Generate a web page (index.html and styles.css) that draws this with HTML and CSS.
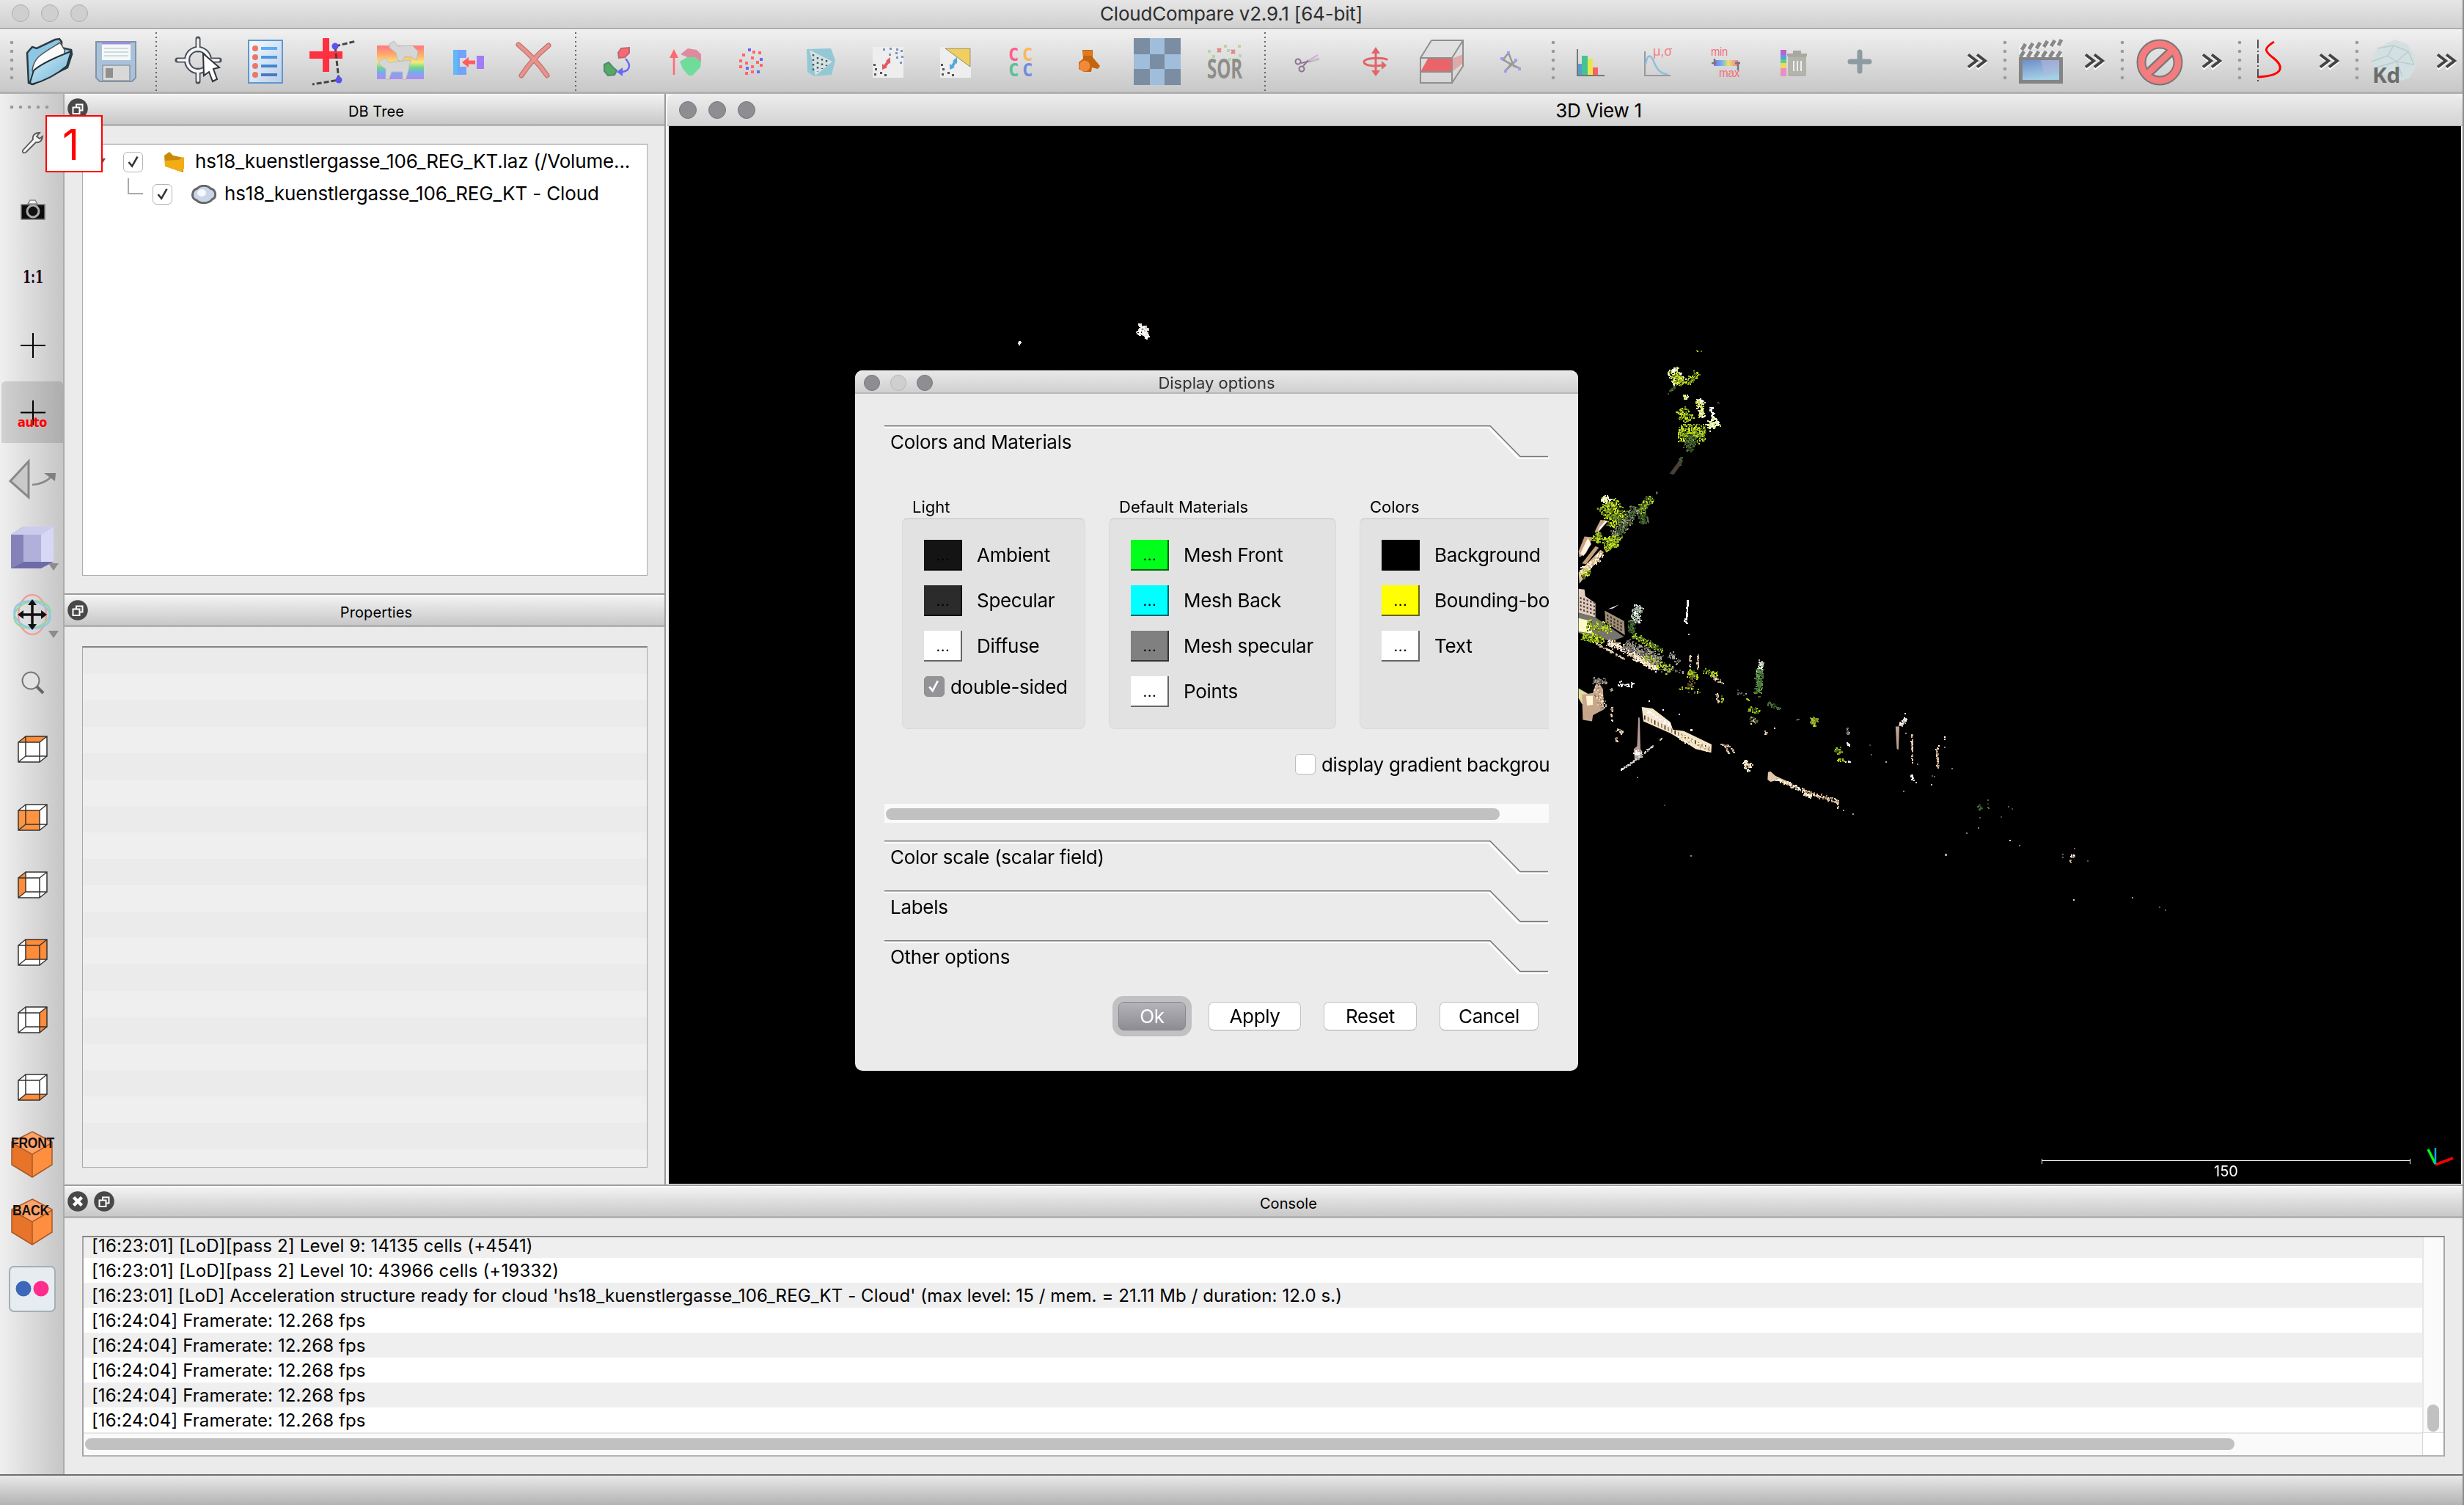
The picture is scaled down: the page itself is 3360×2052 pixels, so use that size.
FILE: index.html
```html
<!DOCTYPE html>
<html lang="en">
<head>
<meta charset="utf-8">
<title>CloudCompare v2.9.1 [64-bit]</title>
<link rel="stylesheet" href="styles.css">
</head>
<body>
<svg class="defs" width="0" height="0">
  <defs>
    <symbol id="grip" overflow="visible"><g fill="#9a9a9a"><circle cx="0" cy="58" r="2.3"/><circle cx="0" cy="70" r="2.3"/><circle cx="0" cy="82" r="2.3"/><circle cx="0" cy="94" r="2.3"/><circle cx="0" cy="106" r="2.3"/></g></symbol>
    <symbol id="sep" overflow="visible"><path d="M0 44V124" stroke="#666" stroke-width="2" stroke-dasharray="2 4"/></symbol>
    <symbol id="more" overflow="visible"><path d="M1 76l11 9-11 9M13 76l11 9-11 9" stroke="#fff" stroke-width="4" fill="none"/><path d="M1 74.500l11 8.500-11 8.500M13 74.500l11 8.500-11 8.500" stroke="#444" stroke-width="4" fill="none"/></symbol>
    <symbol id="wire" overflow="visible"><path d="M1 9H30V36H1ZM11 1H40V28H11ZM1 9L11 1M30 9L40 1M30 36L40 28M1 36L11 28" fill="none" stroke="#333" stroke-width="1.500"/></symbol>
    <symbol id="hull" overflow="visible"><path d="M1 9L11 1H40V28L30 36H1Z" fill="#fff"/></symbol>
    <symbol id="block" overflow="visible"><path d="M44 0L71 14V45L44 62L16 45V14Z" fill="#ff8f40"/><path d="M16 15L44 31V62L16 45Z" fill="#e8742a"/><path d="M44 0L71 15 44 31 16 15Z" fill="#ffa269"/><path d="M44 0L71 14V45L44 62L16 45V14ZM16 15L44 31 71 15M44 31V62" fill="none" stroke="#a85a2a" stroke-width="1.500"/></symbol>
    <symbol id="float" viewBox="0 0 28 28"><circle cx="14" cy="14" r="13.800" fill="#484848"/><path d="M12 12V8.500H20.500V16.500H17" fill="none" stroke="#fff" stroke-width="2"/><path d="M7.500 12.500H16.500V21H7.500Z" fill="none" stroke="#fff" stroke-width="2"/></symbol>
    <symbol id="close" viewBox="0 0 28 28"><circle cx="14" cy="14" r="13.800" fill="#484848"/><path d="M8.500 8.500L19.500 19.500M19.500 8.500L8.500 19.500" stroke="#fff" stroke-width="4.500"/></symbol>
    <symbol id="head" viewBox="0 0 906 46"><path d="M0 2.500H824L865 45H906" fill="none" stroke="#fff" stroke-width="3"/><path d="M0 .7H826L867 42.500H905" fill="none" stroke="#777" stroke-width="1.500"/></symbol>
    <linearGradient id="film" x1="0" y1="0" x2="0.300" y2="1"><stop offset="0" stop-color="#6f8fcc"/><stop offset="1" stop-color="#a5cfe4"/></linearGradient>
    <linearGradient id="rainbow" x1="0" y1="0" x2="0" y2="1"><stop offset=".05" stop-color="#ff7f7f"/><stop offset=".3" stop-color="#ffb06a"/><stop offset=".5" stop-color="#f5ea7a"/><stop offset=".65" stop-color="#6fd98a"/><stop offset=".8" stop-color="#77aaf0"/><stop offset="1" stop-color="#b08af0"/></linearGradient>
    <linearGradient id="spectrum"><stop offset="0" stop-color="#8a6ae0"/><stop offset=".3" stop-color="#6ab0f0"/><stop offset=".6" stop-color="#e8e070"/><stop offset="1" stop-color="#f07aa0"/></linearGradient>
    <linearGradient id="sheet" x1="0" y1="0" x2="1" y2="1"><stop offset="0" stop-color="#f6fbff"/><stop offset="1" stop-color="#b8cdea"/></linearGradient>
    <linearGradient id="folder" x1="0" y1="0" x2="1" y2="1"><stop offset="0" stop-color="#d5eef8"/><stop offset="1" stop-color="#6cb4d6"/></linearGradient>
  </defs>
</svg>

<header class="titlebar">
  <div class="lights"><i></i><i></i><i></i></div>
  <span class="title">CloudCompare v2.9.1 [64-bit]</span>
</header>

<nav class="toolbar">
  <svg viewBox="0 41 24 84" width="24"><use href="#grip" x="16"/></svg>
  <svg viewBox="24 41 90 84" width="90"><path d="M37 72L44 64 50 66 75 54 81 53 84 57V65L97 68 98 74 92 92 45 115 39 113Z" fill="#8cc8e4" stroke="#2c3a42" stroke-width="2.500"/><path d="M44 96C46 78 56 74 82 58L88 68 88 78 48 104Z" fill="#fafafa" stroke="#555" stroke-width="1.500"/><path d="M41 112L46 96Q60 84 97 70L91 90Q70 108 43 115Z" fill="url(#folder)" stroke="#24323a" stroke-width="2"/></svg>
  <svg viewBox="114 41 94 84" width="94"><path d="M131 57H185V106L180 111H136L131 106Z" fill="#a9c2dc" stroke="#8493a3" stroke-width="2"/><path d="M139 59H178V82H139Z" fill="#f4f8f8"/><path d="M139 59H178" stroke="#a090e0" stroke-width="3"/><path d="M142 66H175M142 71H175M142 76H175" stroke="#cfdcdc" stroke-width="2"/><path d="M140 89H177V110H140Z" fill="#d8d8d8" stroke="#8c98a2" stroke-width="1.500"/><path d="M144 93H154V106H144Z" fill="#8f8f8f"/></svg>
  <svg viewBox="208 41 10 84" width="10"><use href="#sep" x="213"/></svg>
  <svg viewBox="218 41 102 84" width="102"><circle cx="270" cy="82" r="15" fill="none" stroke="#4a4f58" stroke-width="8"/><path d="M270 53V68M270 96V111M242 82H256M284 82H299" stroke="#4a4f58" stroke-width="7" stroke-linecap="round"/><circle cx="270" cy="82" r="15" fill="none" stroke="#f4f6f8" stroke-width="4"/><path d="M270 54V67M270 97V110M243 82H255M285 82H298" stroke="#f4f6f8" stroke-width="3.500" stroke-linecap="round"/><path d="M277 73L299 92 291 94 296 108 290 111 285 98 278 103Z" fill="#fff" stroke="#30343a" stroke-width="2"/></svg>
  <svg viewBox="320 41 84 84" width="84"><path d="M339 55H385V113H339Z" fill="url(#sheet)" stroke="#5f97d0" stroke-width="2"/><path d="M356 66H378" stroke="#5cacf0" stroke-width="4"/><path d="M356 78H378" stroke="#4a98e0" stroke-width="4"/><path d="M356 90H378" stroke="#4484d0" stroke-width="4"/><path d="M356 102H378" stroke="#4a78c0" stroke-width="4"/><g fill="#ec7763"><circle cx="348" cy="66" r="4"/><circle cx="348" cy="78" r="4"/><circle cx="348" cy="90" r="4"/><circle cx="348" cy="102" r="4"/></g></svg>
  <svg viewBox="404 41 96 84" width="96"><path d="M440 52H449V70H467V80H449V98H440V80H422V70H440Z" fill="#ff3140"/><path d="M457 63L486 56M457 63L462 109L426 115" fill="none" stroke="#444" stroke-width="3" stroke-dasharray="7 3"/><circle cx="457" cy="63" r="4.500" fill="#5b52f0"/><circle cx="462" cy="109" r="4.500" fill="#5b52f0"/></svg>
  <svg viewBox="500 41 98 84" width="98"><path d="M514 62H578V108H514Z" fill="url(#rainbow)"/><g fill="#d6d6d6" stroke="#bbb" stroke-width="1"><path d="M531 60L537 56 543 63 562 62 570 70 568 82 562 78 552 77 548 84 542 82 540 72 531 65Z"/><path d="M517 83L525 79 531 85 550 83 560 82 557 96 553 109 549 108 549 98 534 98 530 109 526 108 526 94 517 88Z"/></g></svg>
  <svg viewBox="598 41 82 84" width="82"><path d="M618 68H636V79H627V91H636V102H618Z" fill="#72a2fa"/><path d="M618 68H624V102H618Z" fill="#60baf8"/><path d="M650 76H660V94H650Z" fill="#a07cf6"/><path d="M648 85H638" stroke="#ff5a60" stroke-width="5"/><path d="M630 85L639 78V92Z" fill="#ff5a60"/></svg>
  <svg viewBox="680 41 100 84" width="100"><path d="M707 61Q730 80 746 103M748 62Q726 80 711 103" fill="none" stroke="#bd7672" stroke-width="7" stroke-linecap="round"/><path d="M707 61Q730 80 746 103M748 62Q726 80 711 103" fill="none" stroke="#ea928c" stroke-width="4.500" stroke-linecap="round"/></svg>
  <svg viewBox="780 41 10 84" width="10"><use href="#sep" x="785"/></svg>
  <svg viewBox="790 41 100 84" width="100"><path d="M847 66L858 65V72L852 78 844 79 843 72Z" fill="#fd686e" stroke="#b96a72" stroke-width="2"/><path d="M824 88L830 85 836 92 841 96 838 102 829 103 824 97Z" fill="#55aa60" stroke="#508878" stroke-width="2"/><path d="M853 80C862 90 858 98 846 98" fill="none" stroke="#6b66f6" stroke-width="2.500"/><path d="M841 98L849 92V104Z" fill="#6b66f6"/></svg>
  <svg viewBox="890 41 90 84" width="90"><path d="M919 102V74" stroke="#ff6a70" stroke-width="2.500"/><path d="M913 79L919 67 925 79Z" fill="#ff6a70"/><path d="M928 74L938 66 950 68 956 74V84L942 80Z" fill="#e08aa0"/><path d="M927 84L937 78 948 78 956 84 955 92 944 103H939L931 94Z" fill="#70dc9c"/></svg>
  <svg viewBox="980 41 90 84" width="90"><g fill="#ff666b"><path d="M1012 73h4v4h-4zM1026 69h4v4h-4zM1034 70h4v4h-4zM1008 81h4v4h-4zM1024 77h4v4h-4zM1016 84h4v4h-4zM1031 83h4v4h-4zM1008 89h4v4h-4zM1024 89h4v4h-4zM1036 87h4v4h-4zM1016 98h4v4h-4zM1024 96h4v4h-4z"/></g><g fill="#6b66f6"><path d="M1020 66h4v4h-4zM1036 79h4v4h-4zM1017 91h4v4h-4zM1032 96h4v4h-4z"/></g></svg>
  <svg viewBox="1070 41 90 84" width="90"><path d="M1100 67L1133 66 1139 82 1134 102 1110 104 1101 98Z" fill="#94c8d4"/><path d="M1104 68L1135 84 1112 103Z" fill="#d4e2e4"/><path d="M1109 74v24M1115 78v20M1121 80v14M1127 82v8" stroke="#555" stroke-width="2.500" stroke-dasharray="2.500 4"/></svg>
  <svg viewBox="1160 41 100 84" width="100"><path d="M1190 64H1232V106H1190Z" fill="#eee"/><path d="M1204 66h3v3h-3zM1213 65h3v3h-3zM1222 66h3v3h-3zM1212 73h3v3h-3zM1221 71h3v3h-3zM1228 68h3v3h-3zM1222 77h3v3h-3zM1229 76h3v3h-3zM1227 84h3v3h-3z" fill="#7d97bb"/><path d="M1191 87h3v3h-3zM1193 93h3v3h-3zM1192 100h3v3h-3zM1200 98h3v3h-3zM1206 101h3v3h-3z" fill="#555"/><path d="M1206 91L1213 82" stroke="#e05a60" stroke-width="4"/><path d="M1208 83L1214 78V87ZM1203 87V95L1210 92Z" fill="#e05a60"/></svg>
  <svg viewBox="1260 41 90 84" width="90"><path d="M1282 64H1324V106H1282Z" fill="#eee"/><path d="M1289 66H1323V91Z" fill="#f0cf60" stroke="#8f8a70"/><path d="M1283 87h3v3h-3zM1285 93h3v3h-3zM1284 100h3v3h-3zM1292 98h3v3h-3zM1298 101h3v3h-3z" fill="#555"/><path d="M1298 91L1304 82" stroke="#55a8dc" stroke-width="4"/><path d="M1299 83L1305 78V87ZM1295 87V95L1302 92Z" fill="#55a8dc"/></svg>
  <svg viewBox="1350 41 90 84" width="90"><g class="tcc"><text x="1375" y="83" fill="#ff5f8c">C</text><text x="1394" y="83" fill="#f9b95c">C</text><text x="1375" y="104" fill="#58c096">C</text><text x="1394" y="104" fill="#6f8edc">C</text></g></svg>
  <svg viewBox="1440 41 80 84" width="80"><path d="M1476 68H1490V78L1500 90 1497 94 1489 92 1488 98H1478L1471 94V85L1477 80Z" fill="#c4640c"/><circle cx="1479" cy="90" r="7.500" fill="#f0893a"/><path d="M1477 69H1489V76H1477Z" fill="#e07a20"/></svg>
  <svg viewBox="1520 41 110 84" width="110"><path d="M1546 52H1610V116H1546Z" fill="#a0bedb"/><path d="M1546 52h22v22h-22zM1588 52h22v22h-22zM1568 74h20v20h-20zM1546 94h22v22h-22zM1588 94h22v22h-22z" fill="#7a8da2"/></svg>
  <svg viewBox="1630 41 90 84" width="90"><text class="tsor" x="1646" y="107" textLength="48" lengthAdjust="spacingAndGlyphs">SOR</text><g fill="#b7d6a4"><path d="M1647 68h4v4h-4zM1669 61h4v4h-4zM1688 61h4v4h-4zM1673 67h4v4h-4zM1689 74h4v4h-4zM1675 79h4v4h-4zM1653 75h4v4h-4z"/></g><path d="M1660 66l5 5m0-5l-5 5M1679 68l5 5m0-5l-5 5" stroke="#dc8a84" stroke-width="2.500"/></svg>
  <svg viewBox="1720 41 10 84" width="10"><use href="#sep" x="1725"/></svg>
  <svg viewBox="1730 41 100 84" width="100"><g fill="none" stroke="#8c7490" stroke-width="2"><circle cx="1770" cy="84" r="3.500"/><circle cx="1775" cy="94" r="3.500"/><path d="M1774 86L1788 83M1777 90L1784 82"/></g><path d="M1784 83L1797 75" stroke="#dda8da" stroke-width="2.500"/><path d="M1787 84L1799 80" stroke="#c0c0c0" stroke-width="3"/></svg>
  <svg viewBox="1830 41 85 84" width="85"><path d="M1876 70V98" stroke="#e0656a" stroke-width="3"/><path d="M1870 73L1876 64 1882 73ZM1870 96L1876 104 1882 96Z" fill="#e0656a"/><path d="M1892 82C1890 78 1862 78 1860 84C1860 91 1878 90 1886 89" fill="none" stroke="#e0656a" stroke-width="3"/><path d="M1884 83L1891 89 1884 95Z" fill="#e0656a"/></svg>
  <svg viewBox="1915 41 105 84" width="105"><path d="M1952 55H1995V90L1980 113H1937V79Z" fill="#dcdcdc" fill-opacity=".6"/><path d="M1980 80L1995 74V86L1980 98Z" fill="#e0a8a8"/><path d="M1947 80H1980V98H1937Z" fill="#ea646a"/><path d="M1937 79H1980V113H1937ZM1952 55H1995V90L1980 113M1937 79L1952 55M1980 79L1995 55M1937 98H1980" fill="none" stroke="#8f8f8f" stroke-width="2"/></svg>
  <svg viewBox="2020 41 80 84" width="80"><path d="M2057 72L2050 81 2060 88 2052 98M2057 72L2064 90 2073 93M2068 82L2053 96M2048 81L2070 92" fill="none" stroke="#999" stroke-width="2.500"/><path d="M2055 70h4v4h-4zM2046 78h4v4h-4zM2065 80h4v4h-4zM2070 92h4v4h-4zM2051 95h4v4h-4z" fill="#a0a0ee"/></svg>
  <svg viewBox="2100 41 30 84" width="30"><use href="#grip" x="2118"/></svg>
  <svg viewBox="2130 41 80 84" width="80"><path d="M2151 87h6v16h-6z" fill="#5a9ad0"/><path d="M2157 76h8v27h-8z" fill="#45c492"/><path d="M2165 80h7v23h-7z" fill="#e8e650"/><path d="M2172 92h7v11h-7z" fill="#ff5f62"/><path d="M2151 67V103H2188" fill="none" stroke="#777" stroke-width="2"/></svg>
  <svg viewBox="2210 41 90 84" width="90"><path d="M2243 70V103H2278" fill="none" stroke="#999" stroke-width="2"/><path d="M2244 88C2247 70 2252 76 2256 86S2266 101 2274 101" fill="none" stroke="#8cc0e0" stroke-width="2.500"/><text class="tmu" x="2254" y="76" textLength="26">μ,σ</text></svg>
  <svg viewBox="2300 41 100 84" width="100"><path d="M2337 82H2370V90H2337Z" fill="url(#spectrum)"/><path d="M2338 80V88M2370 84V96M2334 86H2340M2366 86H2373" stroke="#777" stroke-width="2.500"/><text class="tmm" x="2333" y="76" textLength="23" lengthAdjust="spacingAndGlyphs">min</text><text class="tmm" x="2344" y="105" textLength="28" lengthAdjust="spacingAndGlyphs">max</text></svg>
  <svg viewBox="2400 41 90 84" width="90"><path d="M2428 68h8v36h-8z" fill="#e890c0"/><path d="M2428 68h8v7h-8z" fill="#c060d0"/><path d="M2428 75h8v6h-8z" fill="#58a0e0"/><path d="M2428 81h8v5h-8z" fill="#60d080"/><path d="M2428 86h8v7h-8z" fill="#ecd860"/><path d="M2439 77H2462V103H2439Z" fill="#b4b4ac" stroke="#a0a098"/><path d="M2437 73H2464V77H2437ZM2445 69H2456V73H2445Z" fill="#a8a8a2"/><path d="M2446 83V97M2451 83V97M2456 83V97" stroke="#eee" stroke-width="2"/></svg>
  <svg viewBox="2490 41 110 84" width="110"><path d="M2536 71V97M2523 84H2549" stroke="#8d9ba2" stroke-width="7" stroke-linecap="round"/></svg>
  <svg viewBox="2600 41 120 84" width="120"><use href="#more" x="2683"/></svg>
  <svg viewBox="2720 41 26 84" width="26"><use href="#grip" x="2734"/></svg>
  <svg viewBox="2746 41 80 84" width="80"><path d="M2753 61L2812 54V62L2753 69ZM2753 70H2812V78H2753Z" fill="#eee"/><path d="M2757 68l5-8M2767 67l5-8M2777 66l5-8M2787 64l5-8M2797 63l5-8M2807 62l4-8M2755 78l5-8M2765 78l5-8M2775 78l5-8M2785 78l5-8M2795 78l5-8M2805 78l5-8" stroke="#888" stroke-width="5"/><path d="M2753 78H2813V114H2753Z" fill="#848484"/><path d="M2758 82H2808V109H2758Z" fill="url(#film)"/><path d="M2783 82H2808V96L2788 104Z" fill="#b4b8dc" opacity=".6"/></svg>
  <svg viewBox="2826 41 54 84" width="54"><use href="#more" x="2843"/></svg>
  <svg viewBox="2880 41 24 84" width="24"><use href="#grip" x="2894"/></svg>
  <svg viewBox="2904 41 86 84" width="86"><circle cx="2945" cy="85" r="25" fill="none" stroke="#777" stroke-width="13"/><path d="M2928 101L2962 69" stroke="#777" stroke-width="13"/><circle cx="2945" cy="85" r="25" fill="none" stroke="#f47c7e" stroke-width="9"/><path d="M2926 103L2964 67" stroke="#f47c7e" stroke-width="8.500"/></svg>
  <svg viewBox="2990 41 50 84" width="50"><use href="#more" x="3003"/></svg>
  <svg viewBox="3040 41 24 84" width="24"><use href="#grip" x="3054"/></svg>
  <svg viewBox="3064 41 76 84" width="76"><path d="M3079 54V114" stroke="#222" stroke-width="1.500" stroke-dasharray="12 3 2 3"/><path d="M3101 57C3086 66 3088 70 3100 79C3114 90 3116 103 3079 105" fill="none" stroke="#f00" stroke-width="3"/></svg>
  <svg viewBox="3140 41 60 84" width="60"><use href="#more" x="3163"/></svg>
  <svg viewBox="3200 41 24 84" width="24"><use href="#grip" x="3214"/></svg>
  <svg viewBox="3224 41 80 84" width="80"><path d="M3234 84L3242 66 3256 58 3266 54 3282 60 3292 74 3295 90 3286 106 3274 110 3240 98Z" fill="#d3e0e2"/><path d="M3234 84L3256 76 3264 62 3284 70 3292 88M3256 76L3268 84 3284 70M3268 84L3276 104M3242 66L3264 62M3240 92L3268 84L3292 88" fill="none" stroke="#bccbcd" stroke-width="1.500"/><text class="tkd" x="3235" y="113" textLength="38" lengthAdjust="spacingAndGlyphs">Kd</text></svg>
  <svg viewBox="3304 41 54 84" width="54"><use href="#more" x="3323"/></svg>
</nav>

<main class="main">
  <aside class="sidebar">
    <svg viewBox="0 128 86 32" height="32"><g fill="#9a9a9a"><circle cx="16" cy="146" r="2.300"/><circle cx="28" cy="146" r="2.300"/><circle cx="40" cy="146" r="2.300"/><circle cx="52" cy="146" r="2.300"/><circle cx="64" cy="146" r="2.300"/></g></svg>
    <svg viewBox="0 160 86 80" height="80"><path d="M31 205L45 190C44 184 48 181 54 181L50 186 54 189 58 186C57 193 53 195 49 194L35 208C32 209 30 208 31 205Z" fill="#f6f6f6" stroke="#555" stroke-width="1.800"/></svg>
    <svg viewBox="0 240 86 85" height="85"><path d="M38 278L41 273H48L51 278Z" fill="#f4f4f4" stroke="#888" stroke-width="1.500"/><path d="M29 279H61V299H29Z" fill="#0c0c0c" stroke="#777" stroke-width="1.500"/><circle cx="45" cy="288" r="8" fill="#111" stroke="#aaa" stroke-width="3"/></svg>
    <svg viewBox="0 325 86 95" height="95"><text class="t11" x="31" y="386" textLength="28" lengthAdjust="spacingAndGlyphs">1:1</text></svg>
    <svg viewBox="0 420 86 90" height="90"><path d="M28 471H62M45 454V488" stroke="#000" stroke-width="2"/></svg>
    <svg viewBox="0 510 86 100" height="100"><path d="M2 604V526Q2 520 8 520H80Q86 520 86 526V604Z" fill="#000" fill-opacity=".12"/><path d="M28 562.500H62M45 546V580" stroke="#000" stroke-width="2"/><text class="tauto" x="24" y="582" textLength="40" lengthAdjust="spacingAndGlyphs">auto</text></svg>
    <svg viewBox="0 610 86 80" height="80"><path d="M14 656L39 629V678Z" fill="#c9c9c9" stroke="#888" stroke-width="3"/><path d="M44 661Q60 660 70 650" fill="none" stroke="#888" stroke-width="2.500"/><path d="M60 645L76 645 75 656Z" fill="#808080"/></svg>
    <svg viewBox="0 690 86 100" height="100"><path d="M15 729L32 718H73V765L56 775H15Z" fill="#b1b0da"/><path d="M15 729L32 718V766L15 775Z" fill="#8482b8"/><path d="M32 718H73L56 729H15Z" fill="#cccbee"/><path d="M56 729L73 718V765L56 775Z" fill="#d8d7f6"/><path d="M15 775L32 766H73L56 775Z" fill="#6d6ba8"/><path d="M66 768H80L73 778Z" fill="#8c8c8c"/></svg>
    <svg viewBox="0 790 86 90" height="90"><ellipse cx="44" cy="838" rx="19" ry="27" fill="none" stroke="#efa0a0" stroke-width="2.500"/><ellipse cx="44" cy="838" rx="25" ry="18" fill="none" stroke="#92d99a" stroke-width="2.500" transform="rotate(-15 44 838)"/><ellipse cx="44" cy="838" rx="25" ry="18" fill="none" stroke="#92c6ea" stroke-width="2.500" transform="rotate(15 44 838)"/><path d="M44 822V854M28 838H60" stroke="#111" stroke-width="3.500"/><path d="M44 817l6 8h-12zM44 859l6-8h-12zM24 838l8-6v12zM64 838l-8-6v12z" fill="#111"/><path d="M66 860H80L73 870Z" fill="#8c8c8c"/></svg>
    <svg viewBox="0 880 86 98" height="98"><circle cx="42" cy="928" r="11.500" fill="#e6e6e6" fill-opacity=".7" stroke="#777" stroke-width="2"/><path d="M50 936L59 945" stroke="#666" stroke-width="4"/></svg>
    <svg viewBox="0 978 86 92" height="92"><use href="#hull" x="24" y="1003"/><path d="M25 1012L35 1004H64L54 1012Z" fill="#ff8c38"/><use href="#wire" x="24" y="1003"/></svg>
    <svg viewBox="0 1070 86 92" height="92"><use href="#hull" x="24" y="1096"/><path d="M25 1105H54V1132H25Z" fill="#ff9440"/><use href="#wire" x="24" y="1096"/></svg>
    <svg viewBox="0 1162 86 92" height="92"><use href="#hull" x="24" y="1188"/><path d="M25 1197L35 1189V1216L25 1224Z" fill="#ff8c38"/><use href="#wire" x="24" y="1188"/></svg>
    <svg viewBox="0 1254 86 92" height="92"><use href="#hull" x="24" y="1280"/><path d="M35 1281H64V1308H35Z" fill="#ff8c38"/><use href="#wire" x="24" y="1280"/></svg>
    <svg viewBox="0 1346 86 92" height="92"><use href="#hull" x="24" y="1372"/><path d="M54 1381L64 1373V1400L54 1408Z" fill="#ff8c38"/><use href="#wire" x="24" y="1372"/></svg>
    <svg viewBox="0 1438 86 92" height="92"><use href="#hull" x="24" y="1464"/><path d="M25 1500L35 1492H64L54 1500Z" fill="#ff8c38"/><use href="#wire" x="24" y="1464"/></svg>
    <svg viewBox="0 1530 86 92" height="92"><use href="#block" y="1543"/><text class="tcube" x="15" y="1565" textLength="59" lengthAdjust="spacingAndGlyphs">FRONT</text></svg>
    <svg viewBox="0 1622 86 92" height="92"><use href="#block" y="1635"/><text class="tcube" x="17" y="1657" textLength="50" lengthAdjust="spacingAndGlyphs">BACK</text></svg>
    <svg viewBox="0 1714 86 86" height="86"><rect x="13" y="1727" width="62" height="61" rx="6" fill="#e6ecf0" stroke="#a3b0b8" stroke-width="2"/><circle cx="32" cy="1757" r="10.500" fill="#3d68b8"/><circle cx="56" cy="1757" r="10.500" fill="#ff2c8c"/></svg>
  </aside>

  <div class="work">
    <div class="upper">
      <div class="docks">
        <section class="dock tree-dock">
          <h2 class="dock-title"><span class="dock-buttons"><svg><use href="#float"/></svg></span><span class="dock-name">DB Tree</span></h2>
          <div class="tree">
            <div class="row">
              <svg class="twist" viewBox="0 0 16 14"><path d="M0 2H14L7 13Z" fill="#555"/></svg>
              <span class="check"><svg viewBox="0 0 27 27"><path d="M7 14L12 20 20 6" fill="none" stroke="#333" stroke-width="2.800"/></svg></span>
              <svg class="ico-folder" viewBox="0 0 30 30"><path d="M1 6L8 1 13 6 27 9V29L20 27 2 20Z" fill="#c98a08"/><path d="M2 13L20 12 28 8V24L24 28 2 21Z" fill="#f2ac14"/></svg>
              <span>hs18_kuenstlergasse_106_REG_KT.laz (/Volume...</span>
            </div>
            <div class="row child">
              <svg class="branch" viewBox="0 0 22 24"><path d="M1 0V21H21" fill="none" stroke="#b0a8a4" stroke-width="2"/></svg>
              <span class="check"><svg viewBox="0 0 27 27"><path d="M7 14L12 20 20 6" fill="none" stroke="#333" stroke-width="2.800"/></svg></span>
              <svg class="ico-cloud" viewBox="0 0 34 26"><path d="M8 5C12 0 22 0 26 5C34 7 35 17 28 20C24 26 11 26 7 21C-1 19 0 7 8 5Z" fill="#c9d5e8" stroke="#666" stroke-width="3"/><ellipse cx="14" cy="11" rx="6" ry="5" fill="#f6f8fc"/></svg>
              <span>hs18_kuenstlergasse_106_REG_KT - Cloud</span>
            </div>
          </div>
        </section>
        <section class="dock props-dock">
          <h2 class="dock-title"><span class="dock-buttons"><svg><use href="#float"/></svg></span><span class="dock-name">Properties</span></h2>
          <div class="props"></div>
        </section>
      </div>

      <section class="view">
        <div class="view-title"><div class="lights dark"><i></i><i></i><i></i></div><span>3D View 1</span></div>
        <div class="scene">
          <canvas id="cloud" width="2444" height="1442"></canvas>
          <div class="scale"><i></i><span>150</span></div>
          <svg class="axes" viewBox="0 0 40 26"><path d="M14 22L4 2" stroke="#0f0" stroke-width="3.500"/><path d="M14 23L38 14" stroke="#f00" stroke-width="3.500"/><path d="M14 22V0" stroke="#00a8ff" stroke-width="2.500"/></svg>
        </div>
      </section>
    </div>

    <section class="dock console-dock">
      <h2 class="dock-title"><span class="dock-buttons"><svg><use href="#close"/></svg><svg><use href="#float"/></svg></span><span class="dock-name">Console</span></h2>
      <div class="console">
        <ul class="log">
          <li>[16:23:01] [LoD][pass 2] Level 9: 14135 cells (+4541)</li>
          <li>[16:23:01] [LoD][pass 2] Level 10: 43966 cells (+19332)</li>
          <li>[16:23:01] [LoD] Acceleration structure ready for cloud 'hs18_kuenstlergasse_106_REG_KT - Cloud' (max level: 15 / mem. = 21.11 Mb / duration: 12.0 s.)</li>
          <li>[16:24:04] Framerate: 12.268 fps</li>
          <li>[16:24:04] Framerate: 12.268 fps</li>
          <li>[16:24:04] Framerate: 12.268 fps</li>
          <li>[16:24:04] Framerate: 12.268 fps</li>
          <li>[16:24:04] Framerate: 12.268 fps</li>
        </ul>
        <div class="vbar"><i></i></div>
        <div class="hbar"><i></i></div>
        <div class="corner"></div>
      </div>
    </section>
  </div>
</main>
<footer class="status"></footer>

<div class="callout">1</div>

<div class="dialog">
  <div class="dialog-title"><div class="lights dark small"><i></i><i class="off"></i><i></i></div><span>Display options</span></div>
  <div class="dialog-body">
    <div class="sect first"><svg><use href="#head"/></svg><span>Colors and Materials</span></div>
    <div class="panel">
      <div class="groups">
        <div class="group g-light"><h3>Light</h3><div class="box">
          <div class="swatch-row"><b class="sw ambient">...</b>Ambient</div>
          <div class="swatch-row"><b class="sw specular">...</b>Specular</div>
          <div class="swatch-row"><b class="sw white">...</b>Diffuse</div>
          <div class="check-row"><b class="cb on"><svg viewBox="0 0 28 28"><path d="M7 15L12 21 20 6" fill="none" stroke="#fff" stroke-width="3"/></svg></b>double-sided</div>
        </div></div>
        <div class="group g-mat"><h3>Default Materials</h3><div class="box">
          <div class="swatch-row"><b class="sw green">...</b>Mesh Front</div>
          <div class="swatch-row"><b class="sw cyan">...</b>Mesh Back</div>
          <div class="swatch-row"><b class="sw gray">...</b>Mesh specular</div>
          <div class="swatch-row"><b class="sw white">...</b>Points</div>
        </div></div>
        <div class="group g-col"><h3>Colors</h3><div class="box">
          <div class="swatch-row"><b class="sw black"></b>Background</div>
          <div class="swatch-row"><b class="sw yellow">...</b>Bounding-bo</div>
          <div class="swatch-row"><b class="sw white">...</b>Text</div>
        </div></div>
      </div>
      <div class="check-row gradient"><b class="cb"></b>display gradient backgrou</div>
      <div class="panel-bar"><i></i></div>
    </div>
    <div class="sect"><svg><use href="#head"/></svg><span>Color scale (scalar field)</span></div>
    <div class="sect"><svg><use href="#head"/></svg><span>Labels</span></div>
    <div class="sect"><svg><use href="#head"/></svg><span>Other options</span></div>
    <div class="actions"><button class="btn ok">Ok</button><button class="btn apply">Apply</button><button class="btn reset">Reset</button><button class="btn cancel">Cancel</button></div>
  </div>
</div>
<script src="cloud.js"></script>
</body>
</html>
```
FILE: styles.css
```css
* { box-sizing: border-box; margin: 0; padding: 0; }
body { width: 3360px; height: 2052px; overflow: hidden; display: flex; flex-direction: column; border-right: 2px solid #8c8c8c; background: #ebebeb; color: #000; font: 26px/31px Inter, "Liberation Sans", sans-serif; letter-spacing: -.3px; position: relative; }
svg { display: block; }
.defs { position: absolute; }

.titlebar { flex: none; height: 40px; display: grid; grid-template-columns: 1fr auto 1fr; background: linear-gradient(#e6e6e6, #d0d0d0); border-bottom: 2px solid #acacac; color: #2e2e2e; letter-spacing: -.18px; }
.title { line-height: 38px; }
.lights { display: flex; gap: 16px; padding: 6px 0 0 16px; }
.lights i { width: 24px; height: 24px; border-radius: 50%; background: #cfcfcf; border: 1.500px solid #adadad; }

.toolbar { flex: none; height: 88px; display: flex; background: linear-gradient(#f0f0f0, #c8c8c8); border-top: 1px solid #fff; border-bottom: 3px solid #b0b0b0; }
.toolbar svg { flex: none; height: 84px; }
.tcc text { font: 700 24px "DejaVu Sans Mono", monospace; }
.tsor { font: 700 37px "Open Sans", sans-serif; fill: #8e8e8a; }
.tmu { font: 400 18px "Liberation Sans", sans-serif; fill: #f58088; }
.tmm { font: 400 17px "Liberation Sans", sans-serif; fill: #f07078; }
.tkd { font: 700 28px "Open Sans", sans-serif; fill: #6c6c6c; }
.t11 { font: 700 25px "DejaVu Serif", serif; fill: #1a001a; }
.tauto { font: 700 18px "DejaVu Sans", sans-serif; fill: #f00; }
.tcube { font: 700 21px "Liberation Sans", sans-serif; fill: #111; }

.main { flex: none; height: 1882px; display: flex; }
.sidebar { flex: none; width: 88px; background: linear-gradient(90deg, #efefef, #c6c6c6); border-right: 2px solid #ababab; }
.sidebar svg { width: 86px; }
.work { flex: 1; min-width: 0; display: flex; flex-direction: column; }
.upper { flex: none; height: 1487px; display: flex; }
.docks { flex: none; width: 820px; border-right: 2px solid #999; display: flex; flex-direction: column; }

.dock { flex: none; }
.tree-dock { height: 681px; }
.props-dock { height: 806px; border-top: 2px solid #9c9c9c; }
.console-dock { height: 395px; border-top: 2px solid #9c9c9c; }
.dock-title { height: 44px; display: flex; background: linear-gradient(#f2f2f2, #c8c8c8); border-top: 2px solid #f9f9f9; border-bottom: 3px solid #b2b2b2; font-size: 20px; font-weight: 400; line-height: 45px; letter-spacing: .1px; }
.dock-name { flex: 1; text-align: center; }
.tree-dock .dock-title { border-top-width: 1px; line-height: 46px; }
.dock-buttons { display: flex; gap: 8px; padding: 5px 0 0 4px; }
.dock-buttons svg { width: 28px; height: 28px; }

.tree { margin: 24px 24px 0; height: 589px; background: #fff; border: 1.500px solid #adadad; border-top-color: #8a8a8a; letter-spacing: -.14px; padding-top: 2px; width: 771px; }
.row { height: 44px; display: flex; align-items: center; line-height: 38px; }
.row > span:last-child { height: 40px; }
.twist { width: 16px; height: 14px; margin-left: 17px; flex: none; }
.check { flex: none; width: 27px; height: 28px; border: 1.500px solid #b4b4b4; border-radius: 6px; background: #fff; margin-left: 22px; }
.ico-folder { flex: none; width: 30px; height: 30px; margin: 0 13px 0 28px; }
.child { padding-left: 61px; }
.branch { width: 22px; height: 24px; align-self: flex-start; flex: none; }
.child .check { margin-left: 12px; }
.ico-cloud { flex: none; width: 34px; height: 26px; margin: 0 11px 0 26px; }

.props { margin: 26px 24px 0; width: 771px; height: 711px; border: 1.500px solid #a8a8a8; border-top: 2px solid #858585; background: repeating-linear-gradient(#ebebeb 0 36px, #efefef 36px 72px); }

.view { flex: 1; min-width: 0; background: #f4f4f4; padding-left: 2px; display: flex; flex-direction: column; }
.view-title { height: 44px; display: flex; background: linear-gradient(#ededed, #d3d3d3); border-bottom: 1px solid #b4b4b4; line-height: 45px; border-radius: 10px 10px 0 0; }
.view-title span { flex: 1; text-align: center; padding-right: 28px; }
.lights.dark { padding: 10px 0 0 16px; }
.lights.dark i { background: #8e8d92; border-color: #77767b; }
.scene { flex: none; height: 1442px; margin: 0 2px 0 2px; background: #000; position: relative; }
#cloud { display: block; }
.scale { position: absolute; left: 1872px; top: 1408px; width: 503px; color: #fff; text-align: center; }
.scale i { display: block; height: 7px; border: solid #fff; border-width: 0 1px; background: linear-gradient(#fff, #fff) 0 2px / 100% 1px no-repeat; }
.scale span { display: block; font-size: 20px; line-height: 21px; letter-spacing: 0; }
.axes { position: absolute; left: 2395px; top: 1393px; width: 40px; height: 26px; }

.console { margin: 24px 24px 0; height: 301px; border: 2px solid #a6a6a6; border-top-color: #858585; border-bottom-color: #b4b4b4; display: grid; grid-template: 266px 1fr / 1fr 29px; }
.log { list-style: none; overflow: hidden; background: #fff; display: flex; flex-direction: column; justify-content: flex-end; font-size: 24px; letter-spacing: .09px; }
.log li { flex: none; height: 34px; line-height: 35px; padding-left: 11px; white-space: nowrap; }
.log li:nth-child(-n+2) { letter-spacing: .18px; }
.log li:nth-child(odd) { background: #efefef; }
.vbar { background: #fafafa; border-left: 2px solid #e6e6e6; padding: 228px 0 0 5px; }
.vbar i { display: block; width: 16px; height: 37px; border-radius: 8px; background: #c1c1c1; }
.hbar { background: #fafafa; border-top: 2px solid #e6e6e6; padding: 6px 0 0 2px; }
.hbar i { display: block; width: 2931px; height: 16px; border-radius: 8px; background: #c1c1c1; }
.corner { background: #fff; border: solid #d6d6d6; border-width: 1px 0 0 1px; }

.status { flex: none; height: 42px; border-top: 2px solid #6e6e6e; background: linear-gradient(#e8e8e8, #b3b3b3); }

.callout { position: absolute; left: 62px; top: 157px; width: 78px; height: 78px; border: 2px solid #f00; background: #fff; color: #f00; font: 57px/77px Inter, sans-serif; text-align: center; padding-right: 9px; }

.dialog { position: absolute; left: 1166px; top: 505px; width: 986px; height: 955px; background: #ebebeb; border-radius: 10px; overflow: hidden; }
.dialog-title { height: 32px; display: grid; grid-template-columns: 1fr auto 1fr; background: linear-gradient(#e9e9e9, #d0d0d0); border-bottom: 2px solid #b8b8b8; font-size: 22px; line-height: 34px; letter-spacing: 0; color: #333; }
.lights.small { padding: 6px 0 0 12px; gap: 14px; }
.lights.small i { width: 22px; height: 22px; }
.lights.small i.off { background: #cfcfcf; border-color: #b5b5b5; }
.dialog-body { padding: 43px 40px 0; }
.sect { height: 68px; display: grid; }
.sect > * { grid-area: 1 / 1; }
.sect svg { width: 906px; height: 46px; }
.sect span { padding-left: 8px; line-height: 45px; height: 45px; }
.sect.first { height: 46px; }
.panel { overflow: hidden; width: 906px; height: 520px; }
.groups { display: flex; gap: 32px; padding: 52px 0 0 24px; white-space: nowrap; }
.group { flex: none; }
.group h3 { height: 28px; padding-left: 14px; font-size: 22px; font-weight: 400; line-height: 26px; letter-spacing: 0; }
.g-light { width: 250px; }
.g-mat { width: 310px; }
.g-col { width: 300px; }
.box { height: 288px; padding: 28px 0 0 29px; display: flex; flex-direction: column; gap: 20px; background: #e2e2e2; border: 1px solid #dadada; border-top: 2px solid #d4d4d4; border-radius: 8px; }
.swatch-row { display: flex; height: 42px; line-height: 42px; }
.sw { width: 52px; height: 42px; margin-right: 20px; font-size: 20px; font-weight: 400; line-height: 42px; text-align: center; letter-spacing: .5px; border: 2px solid; border-color: transparent rgba(0,0,0,.6) rgba(0,0,0,.6) transparent; border-width: 0 2px 2px 0; padding-left: 2px; }
.ambient { background: #141414; }
.specular { background: #2b2b2b; }
.white { background: #fff; }
.green { background: #00ff1a; }
.cyan { background: #0ff; }
.gray { background: #808080; }
.black { background: #000; }
.yellow { background: #ff0; }
.check-row { display: flex; height: 28px; line-height: 29px; white-space: nowrap; }
.cb { flex: none; width: 28px; height: 28px; margin-right: 8px; border: 1.500px solid #bcbcbc; border-radius: 5px; background: #fff; }
.cb.on { background: #949398; border-color: #8c8b90; }
.cb svg { width: 25px; height: 25px; }
.gradient { margin: 34px 0 0 560px; }
.panel-bar { margin-top: 40px; height: 26px; background: #fafafa; padding: 6px 0 0 2px; }
.panel-bar i { display: block; width: 837px; height: 16px; border-radius: 8px; background: #c1c1c1; }
.actions { display: flex; padding: 16px 0 0 319px; gap: 31px; }
.btn { height: 39px; border: 1.500px solid #c4c4c4; border-bottom-color: #a8a8a8; border-radius: 7px; background: #fff; color: #000; font: inherit; letter-spacing: -.4px; line-height: 36px; }
.ok { width: 92px; color: #fff; background: linear-gradient(#b4b3b9, #8d8c92); border-color: #87868c; box-shadow: 0 0 0 8px #c0c1c3; }
.apply { width: 126px; }
.reset { width: 127px; }
.cancel { width: 135px; }
```
FILE: cloud.js
```javascript
// Draws the scanned point cloud as small coloured points on the 3D view's canvas.
const ctx = document.getElementById('cloud').getContext('2d');
let seed = 7;
const rnd = () => (seed = (seed * 16807) % 2147483647) / 2147483647;
const SX = 0.574, SY = 0.5102, OX = 1228, OY = 288;
const leaf = ['#b8d020', '#8fae1a', '#d4e41e', '#5f7d1c', '#3d5a1c', '#a0c414'];
const dark = ['#2c4420', '#3a5a2a', '#4a6a34', '#24361c', '#56703a'];
const pale = ['#ffffff', '#f0f4c8', '#dce88a', '#c8dc40'];
const wall = ['#c8ac90', '#e0c8a8', '#a88c74', '#f0e0c0', '#8c7460'];
const cream = ['#fff4d0', '#f4e4c0', '#ffffff', '#e4cca4', '#c4a484'];
const grey = ['#6c6860', '#8c8880', '#484640', '#a8a49c'];
const white = ['#ffffff', '#e8e8e8'];

function dot(x, y, c, s) {
  ctx.fillStyle = c;
  ctx.fillRect(Math.round(OX + x * SX), Math.round(OY + y * SY), s || 2, s || 2);
}
// Points scattered across a band of width w that follows a segment.
function band(x1, y1, x2, y2, w, n, pal) {
  const L = Math.hypot(x2 - x1, y2 - y1) || 1, nx = -(y2 - y1) / L, ny = (x2 - x1) / L;
  for (let i = 0; i < n; i++) {
    const t = rnd(), o = (rnd() + rnd() - 1) * w / 1.4;
    dot(x1 + (x2 - x1) * t + nx * o, y1 + (y2 - y1) * t + ny * o, pal[rnd() * pal.length | 0]);
  }
}
function poly(pts, c) {
  ctx.fillStyle = c;
  ctx.beginPath();
  pts.forEach(([x, y]) => ctx.lineTo(OX + x * SX, OY + y * SY));
  ctx.fill();
}

// Upper tree
band(240, 85, 262, 120, 26, 150, pale); band(246, 100, 268, 125, 18, 90, leaf);
band(280, 122, 303, 92, 16, 50, leaf); band(230, 150, 250, 130, 6, 18, dark);
band(274, 152, 275, 164, 8, 20, pale); band(308, 162, 314, 212, 16, 110, pale);
band(262, 190, 282, 222, 24, 120, leaf); band(336, 185, 340, 220, 8, 30, white);
band(326, 238, 352, 222, 20, 80, pale); band(258, 255, 322, 256, 40, 360, leaf);
band(275, 272, 300, 280, 30, 120, dark); band(282, 292, 286, 304, 12, 40, dark);
band(265, 318, 258, 340, 8, 30, dark); poly([[238, 364], [262, 328], [271, 330], [248, 367]], '#4a4038');
band(298, 34, 318, 36, 2, 3, leaf); band(354, 172, 354, 174, 2, 2, dark);
// Hillside trees and houses
band(78, 425, 92, 440, 16, 60, pale); band(88, 440, 118, 500, 44, 460, leaf.slice(1, 5));
band(192, 424, 165, 470, 20, 190, leaf.concat(dark)); band(172, 470, 176, 496, 18, 70, dark);
band(205, 412, 205, 420, 4, 6, grey); band(160, 455, 105, 530, 24, 300, grey.concat(dark));
poly([[60, 520], [74, 488], [92, 490], [68, 522]], '#c8a88c'); poly([[72, 508], [86, 490], [90, 492], [68, 520]], '#fff');
band(70, 520, 60, 545, 18, 80, leaf); band(95, 530, 100, 560, 30, 200, leaf);
poly([[22, 572], [36, 532], [55, 534], [40, 576], [24, 588]], '#c8a080'); poly([[26, 578], [44, 536], [52, 552], [34, 584]], '#fff4e4');
poly([[30, 604], [62, 558], [70, 562], [40, 606]], '#c4a07c'); poly([[22, 628], [74, 568], [82, 574], [60, 606], [24, 658]], '#d8bc98');
band(36, 620, 78, 576, 14, 90, cream); band(24, 625, 46, 625, 26, 90, cream); band(30, 640, 46, 622, 12, 50, leaf);
band(85, 568, 125, 530, 8, 60, leaf);
// Street buildings
poly([[22, 672], [36, 674], [38, 692], [62, 710], [62, 748], [22, 736]], '#e2ccc0');
for (let r = 0; r < 4; r++) for (let k = 0; k < 5; k++) poly([[25 + k * 8, 694 + r * 10 + k * 3], [29 + k * 8, 695 + r * 10 + k * 3], [29 + k * 8, 700 + r * 10 + k * 3], [25 + k * 8, 699 + r * 10 + k * 3]], '#4c443e');
poly([[22, 736], [62, 748], [130, 800], [100, 812], [22, 790]], '#77756e');
poly([[22, 750], [44, 756], [56, 792], [22, 786]], '#fdf8c8');
band(40, 765, 100, 775, 24, 120, leaf); band(30, 795, 80, 812, 22, 140, leaf);
poly([[84, 730], [130, 758], [132, 796], [86, 762]], '#a49078');
for (let r = 0; r < 3; r++) for (let k = 0; k < 5; k++) poly([[89 + k * 8, 740 + r * 9 + k * 5], [93 + k * 8, 742 + r * 9 + k * 5], [93 + k * 8, 747 + r * 9 + k * 5], [89 + k * 8, 745 + r * 9 + k * 5]], '#3a342c');
poly([[92, 726], [118, 714], [104, 724]], '#fff');
band(164, 715, 154, 760, 20, 150, ['#c8d0c8', '#8c9c88', '#fff', '#54705a']); band(146, 755, 148, 790, 12, 80, dark);
band(150, 795, 220, 836, 12, 150, leaf.concat(dark));
band(90, 812, 205, 870, 16, 330, cream); band(130, 818, 215, 862, 26, 320, grey); band(150, 850, 208, 884, 14, 200, cream);
band(60, 815, 130, 858, 4, 60, wall); band(180, 850, 240, 890, 22, 120, leaf.concat(grey));
band(235, 845, 260, 866, 16, 30, grey); band(230, 880, 270, 895, 8, 16, grey);
// Mast and poles
band(280, 700, 277, 755, 3, 50, white); band(272, 750, 280, 765, 6, 12, white); dot(283, 792, '#ccc');
band(305, 840, 303, 888, 3, 26, wall); band(286, 848, 286, 884, 3, 16, wall);
band(280, 895, 305, 905, 18, 60, leaf); band(292, 905, 285, 938, 14, 40, ['#6a5a2a', '#8c8020', '#4a3c20']); band(258, 938, 310, 946, 12, 16, leaf);
band(318, 890, 350, 902, 14, 40, leaf); band(335, 905, 366, 924, 8, 20, wall); band(350, 950, 352, 975, 6, 18, wall); band(360, 955, 362, 975, 6, 12, leaf);
band(395, 945, 420, 955, 8, 8, grey);
// Cypress and shrubs
band(456, 862, 450, 895, 10, 55, white.concat(['#a8b890'])); band(451, 885, 446, 950, 14, 170, ['#4a7a3a', '#6a9a4a', '#3a5a34']); band(450, 955, 450, 960, 2, 2, leaf);
band(418, 962, 424, 970, 5, 8, leaf); band(425, 990, 450, 1000, 16, 34, leaf.slice(3)); band(428, 1015, 442, 1028, 14, 34, dark.concat(wall));
band(470, 975, 500, 994, 8, 26, dark); band(534, 1018, 544, 1020, 4, 4, dark);
band(570, 1022, 590, 1020, 16, 55, ['#b0c040', '#8a9c30', '#6f8020']); band(580, 1028, 582, 1038, 6, 10, leaf);
band(465, 1050, 466, 1060, 5, 8, wall); dot(486, 1042, '#fff');
band(658, 1042, 660, 1060, 7, 18, grey); band(658, 1082, 664, 1090, 5, 6, white); band(630, 1100, 650, 1105, 14, 34, leaf.slice(3)); band(636, 1126, 652, 1132, 8, 12, leaf); band(652, 1131, 666, 1133, 3, 8, white);
dot(712, 1087, '#444'); dot(716, 1113, '#665'); dot(750, 1132, '#aaa');
// Chapel
poly([[22, 938], [56, 960], [56, 984], [30, 980], [22, 964]], '#e0dc98');
poly([[30, 955], [56, 950], [66, 916], [80, 940], [82, 994], [56, 1010], [54, 1026], [32, 1022]], '#c8a68c');
poly([[40, 958], [56, 958], [56, 982], [42, 984]], '#fdf4d0');
band(60, 930, 78, 990, 18, 80, wall); band(55, 915, 88, 920, 14, 70, grey); band(95, 935, 100, 942, 4, 6, grey);
band(115, 925, 150, 930, 14, 26, white); band(99, 988, 99, 1028, 4, 16, wall); band(112, 1045, 126, 1055, 10, 16, wall); band(108, 1068, 112, 1080, 6, 16, wall);
// Church spire
poly([[164, 1015], [167, 1017], [169, 1100], [174, 1108], [166, 1130], [155, 1128], [153, 1100], [161, 1092]], '#b49a94');
band(156, 1105, 170, 1120, 12, 34, white); band(124, 1154, 198, 1090, 3, 70, ['#ddd', '#bbb', '#999']); band(120, 1150, 126, 1154, 4, 6, white);
band(214, 1074, 217, 1070, 3, 4, wall);
// Long facade
poly([[172, 988], [198, 992], [240, 1028], [246, 1048], [272, 1052], [338, 1088], [337, 1110], [300, 1100], [270, 1078], [240, 1058], [176, 1026]], '#f6e6c8');
for (let k = 0; k < 20; k++) { const x = 178 + k * 8, y = 1010 + k * 4.4; poly([[x, y], [x + 2.5, y + 1], [x + 2.5, y + 12], [x, y + 11]], k % 3 ? '#8a7460' : '#1c1814'); }
band(178, 996, 236, 1034, 8, 60, white); band(255, 1064, 332, 1100, 14, 60, cream);
dot(221, 993, '#fff'); dot(189, 970, '#fff'); dot(260, 1006, '#ccc'); dot(287, 1047, '#fff', 3);
band(358, 1086, 380, 1092, 4, 22, wall); band(368, 1090, 378, 1110, 3, 16, wall); band(380, 1094, 392, 1110, 3, 12, wall);
band(414, 1132, 432, 1146, 10, 44, cream); band(416, 1145, 426, 1158, 6, 14, cream);
poly([[472, 1162], [478, 1160], [490, 1172], [530, 1192], [530, 1199], [492, 1184], [478, 1188], [471, 1182]], '#e0c8ac');
band(490, 1178, 560, 1212, 8, 90, cream); band(550, 1210, 638, 1240, 10, 120, wall); band(556, 1218, 575, 1226, 8, 24, cream); band(637, 1236, 637, 1256, 3, 12, wall);
dot(650, 1263, '#a98'); dot(672, 1272, '#a98');
// Distant towers
poly([[775, 1040], [784, 1040], [782, 1102], [778, 1100]], '#c0a090'); band(784, 1036, 798, 1018, 8, 34, ['#fff', '#c8b0a4']); dot(797, 1004, '#fff');
band(812, 1055, 814, 1150, 3, 34, wall); band(810, 1162, 816, 1184, 6, 14, white); dot(798, 1057, '#a98'); dot(826, 1138, '#887'); dot(823, 1188, '#ccc');
band(872, 1096, 874, 1150, 4, 44, wall); dot(890, 1067, '#fff'); dot(890, 1072, '#ddd'); dot(877, 1090, '#fff'); dot(890, 1094, '#888');
dot(907, 1150, '#897c3a'); dot(866, 1172, '#666'); dot(860, 1170, '#555'); dot(859, 1194, '#ccc'); dot(792, 1212, '#8a8c3a');
band(970, 1246, 976, 1262, 8, 14, dark); band(990, 1230, 994, 1264, 5, 4, dark); dot(974, 1282, '#554'); dot(971, 1310, '#786'); dot(1024, 1280, '#543'); dot(1041, 1252, '#564'); dot(1050, 1259, '#444'); dot(943, 1323, '#877');
dot(1045, 1342, '#ddd'); dot(1068, 1357, '#876'); dot(892, 1380, '#b98', 3); dot(288, 1384, '#987'); dot(161, 1175, '#876'); dot(224, 1248, '#444');
band(1190, 1384, 1200, 1386, 6, 16, ['#fff', '#b8a090', '#776']); band(1188, 1394, 1190, 1402, 3, 4, wall); dot(1198, 1364, '#766'); dot(1170, 1380, '#666'); dot(1170, 1387, '#666'); dot(1230, 1397, '#555');
dot(1196, 1502, '#fca'); dot(1336, 1496, '#a98'); dot(1401, 1520, '#654'); dot(1414, 1529, '#565');
// Isolated returns on the left
band(-1022, -26, -1008, -14, 22, 90, white.concat(['#c8b8a8'])); band(-1026, -32, -1018, -34, 10, 16, white); band(-1008, -14, -1006, 2, 14, 36, white);
band(-1312, 10, -1306, 16, 8, 9, white);
```
